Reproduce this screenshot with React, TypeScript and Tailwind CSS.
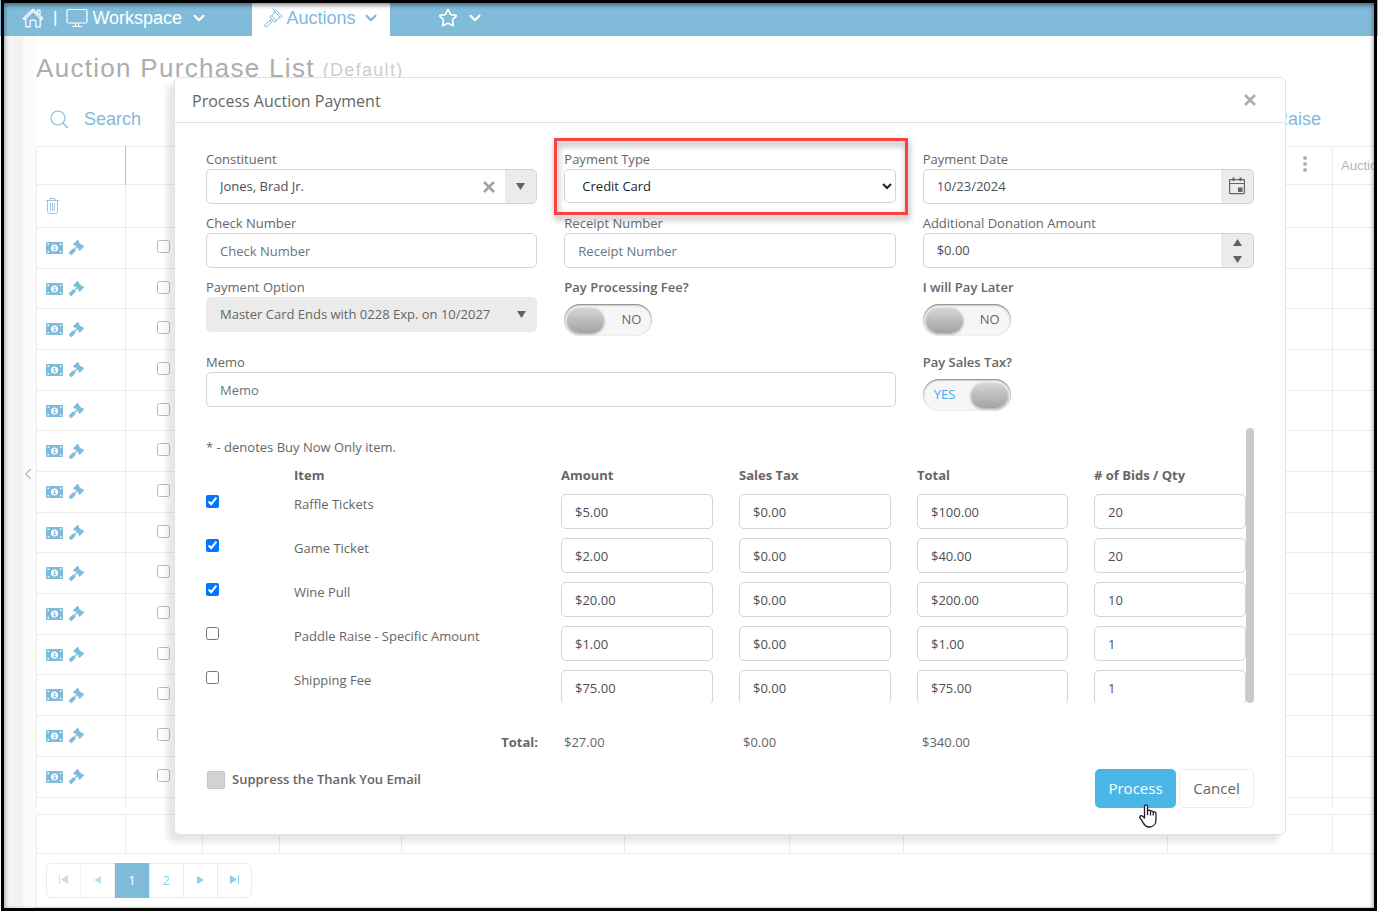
import React, { useState } from 'react';
import { ChevronDown, ChevronLeft, Star } from 'lucide-react';
import { FaGavel } from 'react-icons/fa';

// ===== TYPE DEFINITIONS =====
interface AuctionItem {
  name: string;
  selected: boolean;
  amount: string;
  salesTax: string;
  total: string;
  quantity: string;
}

interface FieldProps {
  id: string;
  label: string;
  className?: string;
  children: React.ReactNode;
}

interface ToggleProps {
  id: string;
  label: string;
  initial: boolean;
}

const ITEMS: AuctionItem[] = [
  { name: 'Raffle Tickets', selected: true, amount: '$5.00', salesTax: '$0.00', total: '$100.00', quantity: '20' },
  { name: 'Game Ticket', selected: true, amount: '$2.00', salesTax: '$0.00', total: '$40.00', quantity: '20' },
  { name: 'Wine Pull', selected: true, amount: '$20.00', salesTax: '$0.00', total: '$200.00', quantity: '10' },
  { name: 'Paddle Raise - Specific Amount', selected: false, amount: '$1.00', salesTax: '$0.00', total: '$1.00', quantity: '1' },
  { name: 'Shipping Fee', selected: false, amount: '$75.00', salesTax: '$0.00', total: '$75.00', quantity: '1' },
];

const PURCHASE_ROWS = Array.from({ length: 14 }, (_, index) => index + 1);
const EMPTY_CELLS = [0, 1, 2, 3, 4, 5, 6, 7];

const inputClass =
  'w-full h-[35px] rounded-[5px] border border-[#ced4da] bg-white px-[13px] text-[13px] text-[#495057] placeholder:text-[#6c757d]';
const cellClass = 'border-l border-[#ececec]';

// ===== ICONS =====
const HomeIcon = () => (
  <svg width="22" height="20" viewBox="0 0 22 20" fill="none" stroke="currentColor" strokeWidth="1.2" strokeLinejoin="round">
    <path d="M1.2 10.4 11 1.200l9.800 9.200-1.100 1.200L11 3.600l-8.700 8z" />
    <path d="M3.800 10.500v8.300h4.400V13.500q0-1.300 1.300-1.300h3q1.300 0 1.300 1.300v5.300h4.400v-8.300M15.500 5V2.200h2.500v5" />
  </svg>
);

const MonitorIcon = () => (
  <svg width="22" height="20" viewBox="0 0 22 20" fill="none" stroke="currentColor" strokeWidth="1.200">
    <rect x="1" y="1.500" width="20" height="13.500" rx="1.500" />
    <path d="M9.500 15v3M12.500 15v3M6 18.500h10" />
  </svg>
);

const GavelOutlineIcon = () => (
  <svg width="19" height="19" viewBox="0 0 19 19" fill="none" stroke="currentColor" strokeWidth="1">
    <path d="m10 2 1.500-1.300 6.700 6.600-1.400 1.500zM5.600 8l1.400-1.500 5.400 5.400-1.400 1.500zM7.600 7.100l3.200-4.200M11.900 11.400l4.200-3.200" />
    <path d="m7.400 9.900-2.200 2.200M9 11.500l-2.100 2.200M5.200 11.700.900 16c-.9 1.200.8 2.700 1.900 1.800l4.300-4.300c.7-1.300-.7-2.500-1.900-1.800z" />
  </svg>
);

const SearchIcon = () => (
  <svg width="19" height="19" viewBox="0 0 19 19" fill="none" stroke="currentColor" strokeWidth="1.100">
    <circle cx="8" cy="8" r="7" />
    <path d="m13 13 5 5" />
  </svg>
);

const TrashIcon = () => (
  <svg width="13" height="16" viewBox="0 0 13 16" fill="none" stroke="currentColor" strokeWidth="1">
    <path d="M0 2.500h13M4 2.500v-2h5v2M1.500 2.500v11q0 2 2 2h6q2 0 2-2v-11M4.500 5v8M6.500 5v8M8.500 5v8" />
  </svg>
);

const BanknoteIcon = () => (
  <svg width="17" height="12" viewBox="0 0 17 12">
    <rect width="17" height="12" rx="1" fill="currentColor" />
    <path d="M1.500 1.500h1.500v1.500H1.500zM14 1.500h1.500v1.500H14zM1.500 9h1.500v1.500H1.500zM14 9h1.500v1.500H14z" fill="#fff" />
    <circle cx="8.500" cy="6" r="3.500" fill="#fff" />
    <path d="M7.500 4.500h1.200V7.500M7.200 7.800h2.800" stroke="currentColor" strokeWidth="1.100" fill="none" />
  </svg>
);

const CalendarIcon = () => (
  <svg width="16" height="18" viewBox="0 0 16 18" fill="none" stroke="#666" strokeWidth="1.200">
    <rect x="0.600" y="2.600" width="14.800" height="14" rx="0.500" />
    <path d="M0 6.500h16" />
    <path d="M4.500 0.500v3.500M11.500 0.500v3.500" strokeWidth="2" />
    <path d="M9 10.500h4.500V15H9z" fill="#666" stroke="none" />
  </svg>
);

const CloseIcon = ({ size }: { size: number }) => (
  <svg width={size} height={size} viewBox="0 0 12 12" fill="none" stroke="currentColor" strokeWidth="2.600">
    <path d="m1 1 10 10M11 1 1 11" />
  </svg>
);

const Triangle = ({ up = false }: { up?: boolean }) => (
  <svg width="9" height="7" viewBox="0 0 9 7" fill="#616161">
    <path d={up ? 'M4.500 0 9 7H0z' : 'M0 0h9L4.500 7z'} />
  </svg>
);

const HandCursor = () => (
  <svg width="18" height="24" viewBox="0 0 18 24" fill="#fff" stroke="#1b1b2b" strokeWidth="1.300" strokeLinejoin="round">
    <path d="M5.500 14V2.200c0-1.900 3-1.900 3 0v4.600c.7-1 2.800-.8 3 .6.900-.9 2.600-.4 2.800.8 1-.6 2.700-.1 2.700 1.400v6.200c0 4-2.500 7.200-6.800 7.200-3.600 0-5-2.200-6.300-4.600L.9 13.700c-.6-1.700 1.300-2.700 2.500-1.600z" />
    <path d="M8.500 6.800v4.500M11.500 7.600v3.900M14.300 8.500v3" fill="none" />
  </svg>
);

// ===== FORM PIECES =====
const Field: React.FC<FieldProps> = ({ id, label, className = '', children }) => (
  <div className={`relative ${className}`}>
    <label htmlFor={id} className="block h-[19px] text-[13px] leading-[19px]">
      {label}
    </label>
    {children}
  </div>
);

const Toggle: React.FC<ToggleProps> = ({ id, label, initial }) => {
  const [on, setOn] = useState(initial);

  return (
    <div>
      <label htmlFor={id} className="block h-[19px] text-[13px] leading-[19px] font-semibold">
        {label}
      </label>
      <label
        className={`mt-[7px] flex h-8 w-[88px] items-center justify-between rounded-full bg-[#f6f6f6] px-[3px] shadow-[inset_0_1px_2px_#777] ${
          on ? 'flex-row-reverse' : ''
        }`}
      >
        <input
          id={id}
          type="checkbox"
          role="switch"
          className="sr-only"
          checked={on}
          onChange={(event) => setOn(event.target.checked)}
        />
        <span className="h-[25px] w-[37px] rounded-full bg-linear-to-b from-[#d6d6d6] to-[#a3a3a3] shadow-[0_1px_3px_#999]" />
        <span className={on ? 'pl-2 text-[13px] text-[#42a9ee]' : 'pr-2 text-[13px]'}>{on ? 'YES' : 'NO'}</span>
      </label>
    </div>
  );
};

// ===== BACKGROUND PAGE =====
const TopBar = () => (
  <header className="flex h-9 bg-[#80bcda] pl-[22px] font-['Liberation_Sans',sans-serif] text-[18px] text-white">
    <nav className="flex h-9 items-center">
      <a href="#home" aria-label="Home">
        <HomeIcon />
      </a>
      <span className="px-[9px] text-[17px]">|</span>
      <a href="#workspace" className="flex w-[186px] items-center gap-1">
        <MonitorIcon />
        Workspace
        <ChevronDown size={18} strokeWidth={3} className="ml-1" />
      </a>
      <a href="#auctions" className="flex h-9 w-[138px] items-center gap-[3px] bg-white pl-3 text-[#7fb9db]">
        <GavelOutlineIcon />
        Auctions
        <ChevronDown size={18} strokeWidth={3} className="ml-1" />
      </a>
      <a href="#favorites" aria-label="Favorites" className="ml-12 flex items-center gap-2">
        <Star size={20} strokeWidth={2} />
        <ChevronDown size={18} strokeWidth={3} />
      </a>
    </nav>
  </header>
);

const PurchaseColumns = () => (
  <colgroup>
    <col className="w-[89px]" />
    <col className="w-[77px]" />
    <col className="w-[77px]" />
    <col className="w-[122px]" />
    <col className="w-[223px]" />
    <col className="w-[165px]" />
    <col className="w-[114px]" />
    <col className="w-[264px]" />
    <col className="w-[165px]" />
    <col />
  </colgroup>
);

const PurchaseList = () => (
  <main className="min-w-0 flex-1 font-['Liberation_Sans',sans-serif]">
    <h1 className="flex h-16 items-center gap-2 text-[26px] tracking-wider whitespace-nowrap text-[#adadad]">
      Auction Purchase List
      <small className="pt-1 text-[18px] text-[#cdcdcd]">(Default)</small>
    </h1>
    <div className="flex h-[46px] items-center justify-between pr-[53px] pb-[7px] pl-[14px] text-[18px] text-[#7fb9db]">
      <button className="flex items-center gap-[15px]">
        <SearchIcon />
        Search
      </button>
      <button>Raise</button>
    </div>

    <table className="h-[661px] w-full table-fixed border-t border-[#ececec] text-[13px]">
      <PurchaseColumns />
      <thead>
        <tr className="h-[38px] border-b border-[#ececec]">
          <th className={cellClass} />
          <th className="border-l border-[#bdbdbd]" />
          {EMPTY_CELLS.slice(2).map((cell) => (
            <th key={cell} className={cellClass} />
          ))}
          <th className={cellClass}>
            <button aria-label="Column menu" className="ml-[135px] flex flex-col gap-[2px] pb-1">
              <span className="h-1 w-1 rounded-full bg-[#b3b3b3]" />
              <span className="h-1 w-1 rounded-full bg-[#b3b3b3]" />
              <span className="h-1 w-1 rounded-full bg-[#b3b3b3]" />
            </button>
          </th>
          <th className={`${cellClass} overflow-hidden pl-2 text-left font-normal whitespace-nowrap text-[#b3b3b3]`}>
            Auction
          </th>
        </tr>
        <tr className="h-[43px] border-b border-[#ececec]">
          <td className={`${cellClass} pl-[9px] text-[#a3c4dc]`}>
            <button aria-label="Clear filters" className="block">
              <TrashIcon />
            </button>
          </td>
          {EMPTY_CELLS.map((cell) => (
            <td key={cell} className={cellClass} />
          ))}
          <td className={cellClass} />
        </tr>
      </thead>
      <tbody>
        {PURCHASE_ROWS.map((row) => (
          <tr key={row} className="border-b border-[#ececec]">
            <td className={`${cellClass} pl-[9px] text-[#7fbbdb]`}>
              <div className="flex items-center gap-[6px]">
                <BanknoteIcon />
                <FaGavel size={15} />
              </div>
            </td>
            <td className={`${cellClass} pb-[3px] pl-[31px]`}>
              <input type="checkbox" aria-label={`Select purchase ${row}`} className="block h-[13px] w-[13px] opacity-50" />
            </td>
            {EMPTY_CELLS.map((cell) => (
              <td key={cell} className={cellClass} />
            ))}
          </tr>
        ))}
        <tr className="h-[10px]">
          {EMPTY_CELLS.map((cell) => (
            <td key={cell} className={cellClass} />
          ))}
          <td className={cellClass} />
          <td className={cellClass} />
        </tr>
      </tbody>
    </table>

    <table className="mt-[7px] w-full table-fixed border-y border-[#ececec]">
      <PurchaseColumns />
      <tbody>
        <tr className="h-[39px]">
          {EMPTY_CELLS.map((cell) => (
            <td key={cell} className={cellClass} />
          ))}
          <td className={cellClass} />
          <td className={cellClass} />
        </tr>
      </tbody>
    </table>

    <div className="border-b border-l border-[#ececec] py-[9px] pl-[9px] font-['Open_Sans',sans-serif] text-[13px] text-[#8fd0f0]">
      <nav aria-label="Pages" className="flex h-[35px] w-[206px] divide-x divide-[#ececec] rounded-[5px] border border-[#ececec]">
        <button aria-label="First page" className="flex flex-1 items-center justify-center pb-[2px] opacity-60">
          <svg width="9" height="9" viewBox="0 0 9 9" fill="currentColor">
            <path d="M0 0h1v9H0zM9 0v9L2 4.500z" />
          </svg>
        </button>
        <button aria-label="Previous page" className="flex flex-1 items-center justify-center pb-[2px] opacity-60">
          <svg width="7" height="8" viewBox="0 0 7 8" fill="currentColor">
            <path d="M7 0v8L0 4z" />
          </svg>
        </button>
        <button className="-my-px flex-1 bg-[#80bcda] text-white">1</button>
        <button className="flex-1">2</button>
        <button aria-label="Next page" className="flex flex-1 items-center justify-center pb-[2px]">
          <svg width="7" height="8" viewBox="0 0 7 8" fill="currentColor">
            <path d="M0 0v8l7-4z" />
          </svg>
        </button>
        <button aria-label="Last page" className="flex flex-1 items-center justify-center pb-[2px]">
          <svg width="9" height="9" viewBox="0 0 9 9" fill="currentColor">
            <path d="M8 0h1v9H8zM0 0v9l7-4.500z" />
          </svg>
        </button>
      </nav>
    </div>
  </main>
);

// ===== PAYMENT DIALOG =====
const PaymentDialog = () => {
  const [items, setItems] = useState<AuctionItem[]>(ITEMS);

  const toggleItem = (index: number) => {
    setItems(items.map((item, i) => (i === index ? { ...item, selected: !item.selected } : item)));
  };

  return (
    <section
      role="dialog"
      aria-labelledby="dialog-title"
      className="w-full rounded-[6px] border border-[#dee2e6] bg-white font-['Open_Sans',sans-serif] text-[13px] text-[#666] shadow-[-7px_7px_6px_rgba(0,0,0,0.1)]"
    >
      <div className="flex h-[45px] items-center justify-between border-b border-[#dee2e6] pr-[29px] pl-[17px]">
        <h2 id="dialog-title" className="pt-px text-[16px]">
          Process Auction Payment
        </h2>
        <button aria-label="Close" className="text-[#adadad]">
          <CloseIcon size={12} />
        </button>
      </div>

      <form className="px-[31px] pt-[27px] pb-[26px]" onSubmit={(event) => event.preventDefault()}>
        <div className="grid grid-cols-3 gap-x-[27px] gap-y-[10px]">
          <Field id="constituent" label="Constituent">
            <div className="flex h-[35px] overflow-hidden rounded-[5px] border border-[#ced4da]">
              <input id="constituent" defaultValue="Jones, Brad Jr." className="min-w-0 flex-1 pl-[13px] text-[#495057]" />
              <button type="button" aria-label="Clear constituent" className="w-8 pl-[10px] text-[#a0a3a6]">
                <CloseIcon size={12} />
              </button>
              <button type="button" aria-label="Open list" className="flex w-[31px] items-center justify-center bg-[#ebebeb]">
                <Triangle />
              </button>
            </div>
          </Field>
          <Field id="payment-type" label="Payment Type">
            <select
              id="payment-type"
              defaultValue="Credit Card"
              className="h-[34px] w-full rounded-[5px] border border-[#ced4da] bg-white pl-[13px] text-[#212529]"
            >
              <option>Credit Card</option>
              <option>Check</option>
              <option>Cash</option>
            </select>
            {/* highlight drawn over the field */}
            <div className="pointer-events-none absolute -top-3 -right-3 -bottom-[11px] -left-[10px] border-[3px] border-[#fb4141] drop-shadow-[1px_4px_3px_rgba(0,0,0,0.4)]" />
          </Field>
          <Field id="payment-date" label="Payment Date">
            <div className="flex h-[35px] overflow-hidden rounded-[5px] border border-[#ced4da]">
              <input id="payment-date" defaultValue="10/23/2024" className="min-w-0 flex-1 pl-[13px] text-[#495057]" />
              <button type="button" aria-label="Pick a date" className="flex w-8 items-center justify-center bg-[#ebebeb] pb-[2px]">
                <CalendarIcon />
              </button>
            </div>
          </Field>

          <Field id="check-number" label="Check Number">
            <input id="check-number" placeholder="Check Number" className={inputClass} />
          </Field>
          <Field id="receipt-number" label="Receipt Number">
            <input id="receipt-number" placeholder="Receipt Number" className={inputClass} />
          </Field>
          <Field id="donation" label="Additional Donation Amount">
            <div className="flex h-[35px] overflow-hidden rounded-[5px] border border-[#ced4da]">
              <input id="donation" defaultValue="$0.00" className="min-w-0 flex-1 pl-[13px] text-[#495057]" />
              <div className="flex w-8 flex-col items-center justify-center gap-[10px] bg-[#ebebeb]">
                <button type="button" aria-label="Increase" className="block">
                  <Triangle up />
                </button>
                <button type="button" aria-label="Decrease" className="block">
                  <Triangle />
                </button>
              </div>
            </div>
          </Field>

          <Field id="payment-option" label="Payment Option">
            <div className="flex h-[35px] items-center rounded-[5px] bg-[#ebebeb] pr-[11px]">
              <select id="payment-option" className="h-full min-w-0 flex-1 appearance-none pl-[14px]">
                <option>Master Card Ends with 0228 Exp. on 10/2027</option>
              </select>
              <Triangle />
            </div>
          </Field>
          <Toggle id="processing-fee" label="Pay Processing Fee?" initial={false} />
          <Toggle id="pay-later" label="I will Pay Later" initial={false} />

          <Field id="memo" label="Memo" className="col-span-2 mt-[7px]">
            <input id="memo" placeholder="Memo" className={inputClass} />
          </Field>
          <div className="mt-[7px]">
            <Toggle id="sales-tax" label="Pay Sales Tax?" initial={true} />
          </div>
        </div>

        <div className="mt-[17px] flex h-[275px]">
          <div className="min-w-0 flex-1 overflow-hidden">
            <p className="pt-[10px] leading-[19px]">* - denotes Buy Now Only item.</p>
            <table className="mt-2 w-full table-fixed text-left">
              <colgroup>
                <col className="w-[88px]" />
                <col />
                <col className="w-[178px]" />
                <col className="w-[178px]" />
                <col className="w-[177px]" />
                <col className="w-[152px]" />
              </colgroup>
              <thead>
                <tr className="h-[29px] align-top leading-[20px]">
                  <th />
                  <th>Item</th>
                  <th>Amount</th>
                  <th>Sales Tax</th>
                  <th>Total</th>
                  <th># of Bids / Qty</th>
                </tr>
              </thead>
              <tbody>
                {items.map((item, index) => (
                  <tr key={item.name} className="h-11 align-top">
                    <td className="pt-[1px]">
                      <input
                        id={`item-${index}`}
                        type="checkbox"
                        checked={item.selected}
                        onChange={() => toggleItem(index)}
                        className="block h-[13px] w-[13px]"
                      />
                    </td>
                    <td className="leading-[20px]">
                      <label htmlFor={`item-${index}`}>{item.name}</label>
                    </td>
                    <td className="pr-[26px]">
                      <input aria-label={`${item.name} amount`} defaultValue={item.amount} className={inputClass} />
                    </td>
                    <td className="pr-[26px]">
                      <input aria-label={`${item.name} sales tax`} defaultValue={item.salesTax} className={inputClass} />
                    </td>
                    <td className="pr-[26px]">
                      <input aria-label={`${item.name} total`} defaultValue={item.total} className={inputClass} />
                    </td>
                    <td>
                      <input aria-label={`${item.name} quantity`} defaultValue={item.quantity} className={inputClass} />
                    </td>
                  </tr>
                ))}
              </tbody>
            </table>
          </div>
          <div className="w-2 rounded-full bg-[#cacaca]" />
        </div>

        <div className="mt-7 flex leading-[22px]">
          <span className="flex-1 pr-[26px] text-right font-bold">Total:</span>
          <span className="w-[179px]">$27.00</span>
          <span className="w-[179px]">$0.00</span>
          <span className="w-[332px]">$340.00</span>
        </div>

        <div className="mt-4 flex items-start justify-between">
          <label className="flex items-center gap-[7px] pt-px font-semibold">
            <input
              type="checkbox"
              className="ml-px h-[18px] w-[18px] appearance-none rounded-[2px] border border-[#c6c6c6] bg-[#d3d3d3]"
            />
            Suppress the Thank You Email
          </label>
          <div className="flex gap-[3px] text-[15px]">
            <button type="submit" className="relative h-[39px] w-[81px] rounded-[5px] bg-[#49b6e6] text-white">
              Process
              <span className="pointer-events-none absolute top-[35px] left-11">
                <HandCursor />
              </span>
            </button>
            <button type="button" className="h-[39px] w-[75px] rounded-[5px] border border-[#ebebeb]">
              Cancel
            </button>
          </div>
        </div>
      </form>
    </section>
  );
};

const App = () => {
  return (
    <div className="relative min-h-screen overflow-hidden bg-white">
      <TopBar />
      <div className="flex pr-1 pb-[3px]">
        <aside className="w-[15px] border-r border-[#ededed] bg-[#f4f4f4]" />
        <div className="w-2 bg-[#f3f3f3]" />
        <div className="flex w-[13px] items-center bg-[#fbfbfb] pt-1 text-[#bbb]">
          <ChevronLeft size={18} strokeWidth={2} className="-mx-1 shrink-0" />
        </div>
        <PurchaseList />
      </div>

      <div className="absolute inset-x-0 top-[77px] pr-[92px] pl-[174px]">
        <PaymentDialog />
      </div>

      <div className="pointer-events-none absolute inset-x-px inset-y-0 border-[3px] border-black">
        <div className="h-full shadow-[inset_0_2px_5px_rgba(0,0,0,0.5)]" />
      </div>
    </div>
  );
};

export default App;
